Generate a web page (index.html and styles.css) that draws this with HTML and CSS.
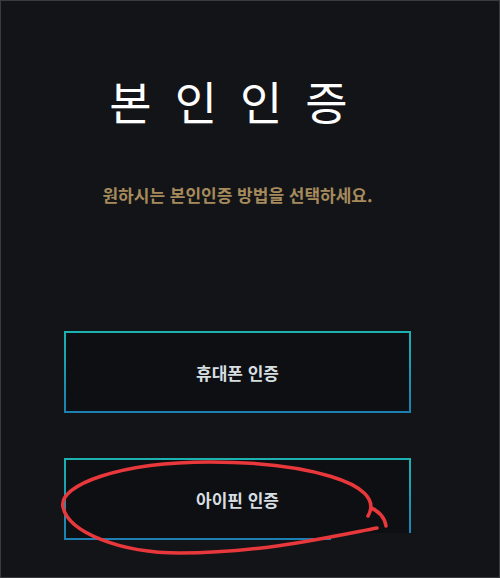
FILE: index.html
```html
<!DOCTYPE html>
<html lang="ko">
<head>
    <meta charset="UTF-8">
    <meta name="viewport" content="width=device-width, initial-scale=1.0">
    <title>본인인증</title>
    <link rel="stylesheet" href="styles.css">
</head>
<body>

<div class="screen">
    <div class="container">
        <h1>본인인증</h1>
        <p class="guide">원하시는 본인인증 방법을 선택하세요.</p>

        <div class="methods">
            <button class="method">휴대폰 인증</button>
            <button class="method">아이핀 인증</button>
        </div>
    </div>

    <!-- erased corner of the second box -->
    <div class="erase"></div>

    <!-- hand drawn red circle -->
    <svg class="mark" width="500" height="578" viewBox="0 0 500 578">
        <path d="M 368 516 C 388 482, 300 462, 210 462 C 120 462, 58 485, 63 507 C 68 532, 120 553, 180 553 C 260 553, 330 537, 377 528"
              fill="none" stroke="#e8383b" stroke-width="3.5" stroke-linecap="round"/>
        <path d="M 371 508 C 379 511, 385 518, 386 526"
              fill="none" stroke="#e8383b" stroke-width="3.5" stroke-linecap="round"/>
    </svg>
</div>

</body>
</html>
```

FILE: styles.css
```css
body {
    margin: 0;
    background: rgb(19, 20, 24);
    font-family: "Noto Sans CJK KR", "Noto Sans", sans-serif;
}
.screen {
    position: relative;
    height: 578px;
    box-sizing: border-box;
    border: 1px solid rgb(58, 59, 63);
    overflow: hidden;
}
.container {
    width: 347px;
    margin-left: 63px;
    text-align: center;
}
h1 {
    margin: 0;
    padding: 66px 0 0 5px;
    font-size: 46px;
    font-weight: 400;
    letter-spacing: 23px;
    line-height: 66px;
    color: white;
}
.guide {
    margin: 51px 0 0;
    font-size: 17px;
    font-weight: 700;
    color: rgb(166, 139, 92);
    line-height: 22px;
}
.methods {
    display: flex;
    flex-direction: column;
    gap: 45px;
    margin-top: 125px;
}
.method {
    height: 82px;
    background: rgb(14, 15, 18);
    border: 2px solid;
    border-image: linear-gradient(rgb(27, 178, 176), rgb(28, 128, 178)) 1;
    color: rgb(214, 222, 224);
    font-family: inherit;
    font-size: 17px;
    font-weight: 700;
    cursor: pointer;
}
.erase {
    position: absolute;
    left: 330px;
    top: 532px;
    width: 90px;
    height: 12px;
    background: rgb(19, 20, 24);
}
.mark {
    position: absolute;
    left: -1px;
    top: -1px;
}
```
